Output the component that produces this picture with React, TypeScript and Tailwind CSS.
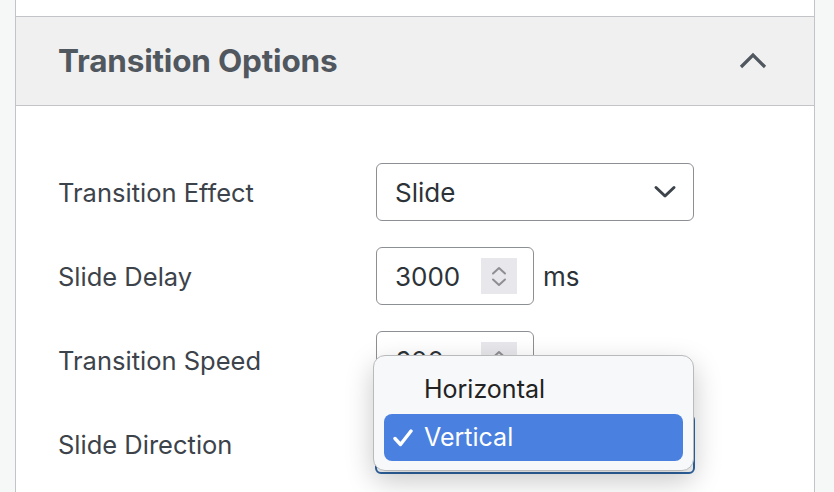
import React from "react";

const font = { fontFamily: "Inter, 'Liberation Sans', sans-serif" };

function Spinner() {
  return (
    <div className="w-[36px] h-[36px] bg-[#e8e8ec] flex flex-col items-center justify-center gap-[3px]">
      <svg width="16" height="9" viewBox="0 0 16 9">
        <polyline points="2,7.5 8,2 14,7.5" fill="none" stroke="#8e8e93" strokeWidth="2" strokeLinecap="round" strokeLinejoin="round" />
      </svg>
      <svg width="16" height="9" viewBox="0 0 16 9">
        <polyline points="2,1.5 8,7 14,1.5" fill="none" stroke="#8e8e93" strokeWidth="2" strokeLinecap="round" strokeLinejoin="round" />
      </svg>
    </div>
  );
}

function NumberInput({ value }: { value: string }) {
  return (
    <div className="w-[158px] h-[58px] border border-[#8c8f94] rounded-[6px] bg-white flex items-center pl-[18px] pr-[16px] justify-between">
      <span className="text-[26px] text-[#2c3338]">{value}</span>
      <Spinner />
    </div>
  );
}

function Chevron() {
  return (
    <svg width="24" height="14" viewBox="0 0 24 14">
      <polyline points="3,2.5 12,11 21,2.5" fill="none" stroke="#3c434a" strokeWidth="3" strokeLinecap="round" strokeLinejoin="round" />
    </svg>
  );
}

export default function App() {
  return (
    <div className="w-[834px] h-[492px] bg-[#f6f7f7] overflow-hidden relative" style={font}>
      <div className="ml-[15px] w-[800px] h-full bg-white border-x border-[#c3c4c7]">
        <div className="h-[17px] border-b border-[#c3c4c7]" />
        <div className="h-[89px] bg-[#f0f0f1] border-b border-[#c3c4c7] flex items-center justify-between pl-[42px] pr-[46px]">
          <h2 className="text-[31.5px] font-bold text-[#50575e] tracking-[-0.2px]">Transition Options</h2>
          <svg width="30" height="18" viewBox="0 0 30 18">
            <polyline points="3,15 15,3 27,15" fill="none" stroke="#50575e" strokeWidth="3.2" strokeLinejoin="miter" />
          </svg>
        </div>
        <div className="pt-[57px] pl-[42px] flex flex-col gap-[26px] text-[#3c434a]">
          <div className="flex items-center h-[58px]">
            <div className="w-[318px] text-[25.5px] pt-[3px]">Transition Effect</div>
            <div className="w-[318px] h-[58px] border border-[#8c8f94] rounded-[6px] flex items-center justify-between pl-[18px] pr-[16px]">
              <span className="text-[26px] text-[#2c3338]">Slide</span>
              <Chevron />
            </div>
          </div>
          <div className="flex items-center h-[58px]">
            <div className="w-[318px] text-[25.5px] pt-[3px]">Slide Delay</div>
            <NumberInput value="3000" />
            <span className="ml-[9px] text-[26px] text-[#2c3338]">ms</span>
          </div>
          <div className="flex items-center h-[58px]">
            <div className="w-[318px] text-[25.5px] pt-[3px]">Transition Speed</div>
            <NumberInput value="600" />
            <span className="ml-[9px] text-[26px] text-[#2c3338]">ms</span>
          </div>
          <div className="flex items-center h-[58px]">
            <div className="w-[318px] text-[25.5px] pt-[3px]">Slide Direction</div>
            <div className="w-[320px] h-[60px] border-2 border-[#2f65a3] rounded-[6px] -ml-[1px]" />
          </div>
        </div>
      </div>

      <div className="absolute left-[373px] top-[355px] w-[321px] h-[116px] rounded-[12px] bg-[#f7f8fa] border border-[#b9babc] shadow-[0_10px_28px_rgba(0,0,0,0.22)] px-[10px] pt-[10px]">
        <div className="h-[48px] flex items-center pl-[40px] text-[25px] text-[#222222]">Horizontal</div>
        <div className="h-[47px] rounded-[8px] bg-[#4a80df] flex items-center pl-[9px] text-[25px] text-white">
          <svg width="20" height="18" viewBox="0 0 20 18" className="mr-[11px]">
            <polyline points="2,9.5 7.5,15.5 18,2" fill="none" stroke="white" strokeWidth="3.4" strokeLinecap="round" strokeLinejoin="round" />
          </svg>
          <span>Vertical</span>
        </div>
      </div>
    </div>
  );
}
